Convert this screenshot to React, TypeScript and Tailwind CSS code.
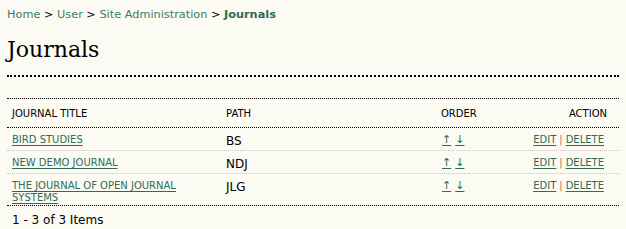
import React from 'react'

const LINK = 'text-[#2f6b55] underline underline-offset-2 decoration-1'

interface Journal {
  title: string
  path: string
}

const JOURNALS: Journal[] = [
  { title: 'Bird Studies', path: 'BS' },
  { title: 'New Demo Journal', path: 'NDJ' },
  { title: 'The Journal of Open Journal Systems', path: 'JLG' },
]

export default function App() {
  return (
    <div className="min-h-screen bg-[#fbfbf3] px-[7px] pt-[8px] font-['DejaVu_Sans',Verdana,sans-serif] text-black">
      {/* Breadcrumb */}
      <div className="text-[11.3px] leading-[14px]">
        <a href="#" className="text-[#3c7a66]">Home</a>
        <span> &gt; </span>
        <a href="#" className="text-[#3c7a66]">User</a>
        <span> &gt; </span>
        <a href="#" className="text-[#3c7a66]">Site Administration</a>
        <span> &gt; </span>
        <a href="#" className="font-bold text-[#2f6b55]">Journals</a>
      </div>

      <h1 className="mt-[15px] font-['DejaVu_Serif',Georgia,serif] text-[22px] font-normal leading-[26px]">Journals</h1>
      <div className="mt-[12px] border-b-2 border-dotted border-black" />

      {/* Table */}
      <div className="mt-[21px] border-t border-dotted border-black">
        <div className="flex h-[29px] items-center border-b border-dotted border-black text-[10px]">
          <div className="w-[219px] pl-[5px]">JOURNAL TITLE</div>
          <div className="w-[215px]">PATH</div>
          <div className="w-[90px]">ORDER</div>
          <div className="flex-1 pr-[12px] text-right">ACTION</div>
        </div>

        {JOURNALS.map((j, i) => (
          <div
            key={j.path}
            className={`flex items-start pt-[4px] pb-[1px] text-[10px] leading-[12px] ${
              i < JOURNALS.length - 1 ? 'border-b border-dotted border-[#c8c8c0]' : 'border-b border-dotted border-black'
            }`}
          >
            <div className="w-[219px] pl-[5px] pr-[40px] pt-[2px]">
              <a href="#" className={`${LINK} uppercase`}>{j.title}</a>
            </div>
            <div className="w-[215px] text-[12px] leading-[15px] pt-[2px]">{j.path}</div>
            <div className="w-[90px] pl-[1px] pt-[2px] text-[11px] leading-[12px]">
              <a href="#" className={LINK}>↑</a>
              <span className="inline-block w-[4px]" />
              <a href="#" className={LINK}>↓</a>
            </div>
            <div className="flex-1 pr-[15px] pt-[2px] text-right">
              <a href="#" className={LINK}>EDIT</a>
              <span className="mx-[3px] text-[#b07a4a]">|</span>
              <a href="#" className={LINK}>DELETE</a>
            </div>
          </div>
        ))}
      </div>

      <div className="pl-[5px] pt-[7px] text-[12px] leading-[14px]">1 - 3 of 3 Items</div>
    </div>
  )
}
